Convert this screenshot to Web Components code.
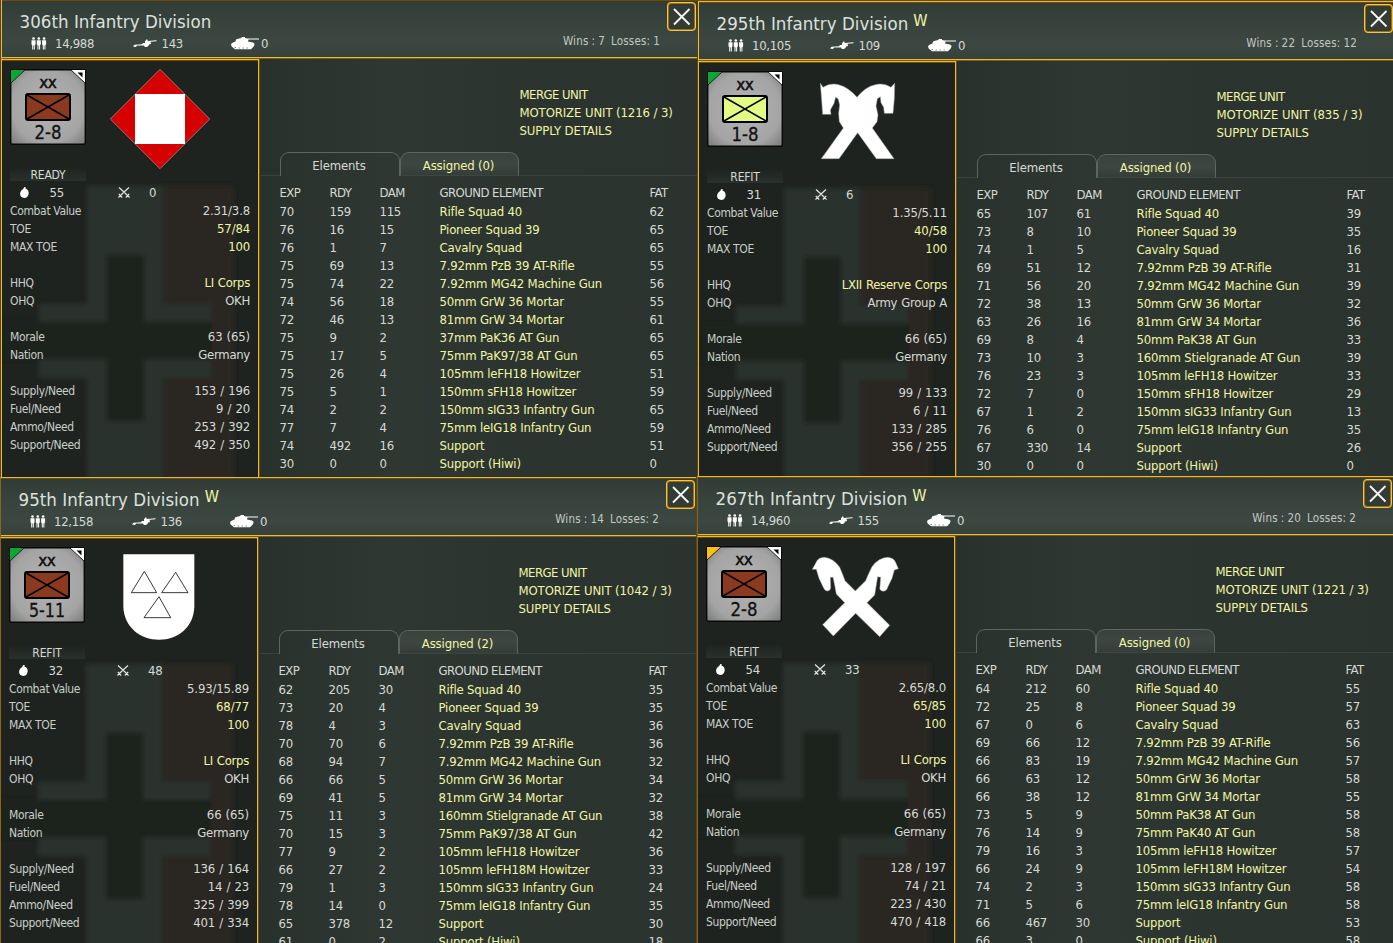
<!DOCTYPE html>
<html lang="en">
<head>
<meta charset="utf-8">
<title>Unit comparison</title>
<style>
html, body { margin: 0; height: 943px; overflow: hidden; background: #2c342f; }
body {
    font-family: "DejaVu Sans Condensed", "DejaVu Sans", sans-serif;
    font-stretch: condensed;
    font-size: 13px;
    color: #d6dad5;
    --gold: #e9b93c;
    --gold-dark: #6d4d08;
    --link: #f1f5a5;
}
</style>
</head>
<body>
<unit-board></unit-board>

<script>
const units = [
    {
        name: '306th Infantry Division', mark: '', men: '14,988', guns: '143', tanks: '0',
        wins: '7', losses: '1', edge: '#e9b93c', status: 'READY', flag: '#0aa832', box: '#8b3a20', power: '2-8', emblem: 'diamond',
        bombs: '55', swords: '0', motorize: '1216', assigned: '0',
        stats: ['2.31/3.8', '57/84', '100', 'LI Corps', 'OKH', '63 (65)', '153 / 196', '9 / 20', '253 / 392', '492 / 350'],
        rows: `70|159|115|Rifle Squad 40|62
76|16|15|Pioneer Squad 39|65
76|1|7|Cavalry Squad|65
75|69|13|7.92mm PzB 39 AT-Rifle|55
75|74|22|7.92mm MG42 Machine Gun|56
74|56|18|50mm GrW 36 Mortar|55
72|46|13|81mm GrW 34 Mortar|61
75|9|2|37mm PaK36 AT Gun|65
75|17|5|75mm PaK97/38 AT Gun|65
75|26|4|105mm leFH18 Howitzer|51
75|5|1|150mm sFH18 Howitzer|59
74|2|2|150mm sIG33 Infantry Gun|65
77|7|4|75mm leIG18 Infantry Gun|59
74|492|16|Support|51
30|0|0|Support (Hiwi)|0`
    },
    {
        name: '95th Infantry Division', mark: 'W', men: '12,158', guns: '136', tanks: '0',
        wins: '14', losses: '2', edge: '#8a6718', status: 'REFIT', flag: '#0aa832', box: '#8b3a20', power: '5-11', emblem: 'shield',
        bombs: '32', swords: '48', motorize: '1042', assigned: '2',
        stats: ['5.93/15.89', '68/77', '100', 'LI Corps', 'OKH', '66 (65)', '136 / 164', '14 / 23', '325 / 399', '401 / 334'],
        rows: `62|205|30|Rifle Squad 40|35
73|20|4|Pioneer Squad 39|35
78|4|3|Cavalry Squad|36
70|70|6|7.92mm PzB 39 AT-Rifle|36
68|94|7|7.92mm MG42 Machine Gun|32
66|66|5|50mm GrW 36 Mortar|34
69|41|5|81mm GrW 34 Mortar|32
75|11|3|160mm Stielgranade AT Gun|38
70|15|3|75mm PaK97/38 AT Gun|42
77|9|2|105mm leFH18 Howitzer|36
66|27|2|105mm leFH18M Howitzer|33
79|1|3|150mm sIG33 Infantry Gun|24
78|14|0|75mm leIG18 Infantry Gun|35
65|378|12|Support|30
61|0|2|Support (Hiwi)|18`
    },
    {
        name: '295th Infantry Division', mark: 'W', men: '10,105', guns: '109', tanks: '0',
        wins: '22', losses: '12', edge: '#e9b93c', status: 'REFIT', flag: '#0aa832', box: '#e4fb84', power: '1-8', emblem: 'horses',
        bombs: '31', swords: '6', motorize: '835', assigned: '0',
        stats: ['1.35/5.11', '40/58', '100', 'LXII Reserve Corps', 'Army Group A', '66 (65)', '99 / 133', '6 / 11', '133 / 285', '356 / 255'],
        rows: `65|107|61|Rifle Squad 40|39
73|8|10|Pioneer Squad 39|35
74|1|5|Cavalry Squad|16
69|51|12|7.92mm PzB 39 AT-Rifle|31
71|56|20|7.92mm MG42 Machine Gun|39
72|38|13|50mm GrW 36 Mortar|32
63|26|16|81mm GrW 34 Mortar|36
69|8|4|50mm PaK38 AT Gun|33
73|10|3|160mm Stielgranade AT Gun|39
76|23|3|105mm leFH18 Howitzer|33
72|7|0|150mm sFH18 Howitzer|29
67|1|2|150mm sIG33 Infantry Gun|13
76|6|0|75mm leIG18 Infantry Gun|35
67|330|14|Support|26
30|0|0|Support (Hiwi)|0`
    },
    {
        name: '267th Infantry Division', mark: 'W', men: '14,960', guns: '155', tanks: '0',
        wins: '20', losses: '2', edge: '#8a6718', status: 'REFIT', flag: '#fdc010', box: '#8b3a20', power: '2-8', emblem: 'heads',
        bombs: '54', swords: '33', motorize: '1221', assigned: '0',
        stats: ['2.65/8.0', '65/85', '100', 'LI Corps', 'OKH', '66 (65)', '128 / 197', '74 / 21', '223 / 430', '470 / 418'],
        rows: `64|212|60|Rifle Squad 40|55
72|25|8|Pioneer Squad 39|57
67|0|6|Cavalry Squad|63
69|66|12|7.92mm PzB 39 AT-Rifle|56
66|83|19|7.92mm MG42 Machine Gun|57
66|63|12|50mm GrW 36 Mortar|58
66|38|12|81mm GrW 34 Mortar|55
73|5|9|50mm PaK38 AT Gun|58
76|14|9|75mm PaK40 AT Gun|58
79|16|3|105mm leFH18 Howitzer|57
66|24|9|105mm leFH18M Howitzer|54
74|2|3|150mm sIG33 Infantry Gun|58
71|5|6|75mm leIG18 Infantry Gun|58
66|467|30|Support|53
66|3|0|Support (Hiwi)|58`
    }
];

const icons = {
    men: `<svg width="16" height="13" fill="#fff"><g id="m"><circle cx="2.5" cy="1.500" r="1.300"/><path d="M.5 3.200h4v4.500h-.7V12.500h-1V8.500h-.6v4h-1V7.700H.5z"/></g><use href="#m" x="5.300"/><use href="#m" x="10.600"/></svg>`,
    gun: `<svg width="24" height="11" fill="#fff"><path d="M0 8.500 1.500 6.800 9 6.200 10 5h2V3.200l2-2.200.8 2 8.700-.8v1l-6 .6.500 2.200-2 .6c-.3 3.200-4.500 3-5 .8L4 7.600 3 9z"/></svg>`,
    tank: `<svg width="28" height="13" fill="#fff"><path d="M8 1.500 10.500 1V0h3.500v1l2.500.6H28v1h-10.500L17 4.400l5 1 1.700 1.600-1 2.500-2.700 2.800H4L.6 9.500 0 7l2-1.600 2.500-.9L5 2.500z"/><path d="M3.500 10h1.500v1H3.500zM7.500 10.500H9v1H7.500zM11.500 10.500H13v1h-1.500zM15.500 10.500H17v1h-1.500z" fill="#8a938d"/></svg>`,
    bomb: `<svg width="9" height="11" fill="#fff"><path d="M3 2.300 4.300 0l1.500.3-.4 1.200L6.900 2.200C9.800 4 9.200 10.900 4.500 10.900-1.200 10.900-1 4.300 3 2.300z"/></svg>`,
    swords: `<svg width="12" height="11" fill="none" stroke="#e8e8e8" stroke-width="1.100"><path d="M1 .5l5 4.500 5.500 5.500M11 .5 6 5 .5 10.500M.8 7l3.400 3.500M11.200 7 7.800 10.500"/></svg>`
};

const emblems = {
    diamond: `<svg viewBox="330 207 300 300"><path d="M480 208 629 357 480 506 331 357z" fill="#d50000" stroke="#a9a9a9" stroke-width="2"/><path d="M405 282h150v150H405z" fill="#fff"/></svg>`,
    shield: `<svg viewBox="327 231 300 300"><path d="M370 253h213v157c-2 62-50 99-106 99s-105-38-107-99z" fill="#fff"/><path d="M433 304l37 64h-76zM527 307l37 61h-79zM477 380l35 63h-80z" fill="none" stroke="#111" stroke-width="2.500"/></svg>`,
    horses: `<svg viewBox="330 213 300 300"><path fill="#fff" stroke="#aaa" stroke-width="1.500" d="M370 250 378 262Q400 248 425 254 455 262 480 292 505 260 535 254 560 248 582 262L593 250 592 295 588 340 562 340 560 322 552 308 550 290 541 296 537 318 543 345 540 365 526 384 591 476 538 476 482 398 426 476 373 476 439 384 427 365 425 340 428 315 424 298 416 291 411 310 400 330 402 343 377 343 374 300Z"/></svg>`,
    heads: `<svg viewBox="327 228 300 300"><path fill="#fff" stroke="#aaa" stroke-width="1.500" d="M346 298 356 280Q362 262 382 262 410 265 428 292 438 315 444 332L475 363 506 332Q515 310 525 290 545 263 573 262 592 264 597 280L604 296 592 300 585 325 572 352Q568 366 556 363 546 360 549 350L551 322 542 320 537 350 533 375 510 398 578 466 548 500 476 430 409 498 377 464 443 398 418 372 413 345 408 322 400 322 401 350Q402 362 390 363 381 360 378 350L366 325 358 298Z"/></svg>`
};

// small helper: open shadow root filled from a string
const shadow = (host, html) => {
    const template = document.createElement('template');
    template.innerHTML = html;
    host.attachShadow({ mode: 'open' }).appendChild(template.content.cloneNode(true));
};


class StatIcon extends HTMLElement {
    connectedCallback() {
        shadow(this, `
<style>
:host { display: flex; align-items: center; }
svg { display: block; flex: none; }
</style>
${icons[this.getAttribute('name')]}<slot></slot>`);
    }
}
customElements.define('stat-icon', StatIcon);


class CloseButton extends HTMLElement {
    connectedCallback() {
        shadow(this, `
<style>
:host { display: block; width: 29px; height: 29px; }
svg { display: block; }
</style>
<svg width="29" height="29"><rect x="1" y="1" width="27" height="27" rx="3" fill="#333b35" stroke="#a06f08" stroke-width="2"/><rect x=".5" y=".5" width="28" height="28" rx="3.500" fill="none" stroke="#f0c650"/><path d="M7 7l15.500 15.500m0-15.500L7 22.500" stroke="#f5f5f5" stroke-width="1.900"/></svg>`);
    }
}
customElements.define('close-button', CloseButton);


class UnitCounter extends HTMLElement {
    connectedCallback() {
        shadow(this, `
<style>
:host { display: block; width: 76px; height: 76px; }
svg { display: block; }
text { font-family: "DejaVu Sans Condensed", "DejaVu Sans", sans-serif; font-stretch: condensed; text-anchor: middle; fill: #111; stroke: #111; stroke-width: .3px; }
.size { stroke-width: .7px; }
</style>
<svg width="76" height="76">
<defs><radialGradient id="g" r=".75"><stop offset="0" stop-color="#b4b4b4"/><stop offset=".65" stop-color="#a4a4a4"/><stop offset="1" stop-color="#707070"/></radialGradient></defs>
<rect x=".7" y=".7" width="74.600" height="74.600" rx="1.500" fill="url(#g)" stroke="#080808" stroke-width="1.400"/>
<path d="M1 1h14L1 14z" fill="${this.getAttribute('flag')}"/><path d="M15 1 1 14" stroke="#222"/>
<path d="M61 1h14v13z" fill="#fff"/><path d="M61 1l14 13" stroke="#222"/><path d="M67.500 3.500h5v5z" fill="#000"/>
<text class="size" x="38" y="19" font-size="13" textLength="17" lengthAdjust="spacingAndGlyphs">XX</text>
<rect x="16" y="25" width="44" height="26" rx="2" fill="${this.getAttribute('box')}" stroke="#000" stroke-width="2"/>
<path d="M17 26l42 24m0-24L17 50" stroke="#000" stroke-width="1.500"/>
<text x="38" y="70" font-size="19" textLength="${this.getAttribute('power').length * 9}" lengthAdjust="spacingAndGlyphs">${this.getAttribute('power')}</text>
</svg>`);
    }
}
customElements.define('unit-counter', UnitCounter);


class UnitEmblem extends HTMLElement {
    connectedCallback() {
        shadow(this, `
<style>
:host { display: block; width: 100px; height: 100px; }
svg { display: block; width: 100px; height: 100px; }
</style>
${emblems[this.getAttribute('name')]}`);
    }
}
customElements.define('unit-emblem', UnitEmblem);


class UnitHeader extends HTMLElement {
    // the panel that owns this header holds the data
    get unit() {
        return this.getRootNode().host.unit;
    }

    connectedCallback() {
        const u = this.unit;
        shadow(this, `
<style>
:host {
    display: flex;
    justify-content: space-between;
    box-sizing: border-box;
    height: 60px;
    border-top: 1px solid var(--gold);
    border-bottom: 1px solid #7d5a0c;
    background: linear-gradient(var(--gold-dark) 0 1px, #323c37 1px, #39443f 45%, #3c4742 75%, #36413c 57px, var(--gold) 57px);
}
.main { padding: 9px 0 0 17.5px; }
h1 { margin: 0; font-size: 18.5px; line-height: 25px; height: 26px; font-weight: normal; letter-spacing: .05px; color: #dde1dc; white-space: nowrap; }
sup { font-size: 16px; line-height: 10px; vertical-align: 4px; color: var(--link); margin-left: 5px; }
.strength { display: grid; grid-template-columns: 102px 98px 60px; padding-left: 11.5px; line-height: 17px; letter-spacing: -.3px; }
.strength stat-icon:nth-child(1) { gap: 8px; }
.strength stat-icon:nth-child(2) { gap: 4.5px; }
.strength stat-icon:nth-child(3) { gap: 2px; }
.side { display: flex; align-items: flex-start; padding-right: 1px; }
.record { padding: 33px 7px 0 0; font-size: 11.5px; line-height: 16px; white-space: pre; letter-spacing: .2px; word-spacing: -.5px; color: #c3c8c3; }
close-button { margin-top: 2px; }
</style>
<div class="main">
<h1>${u.name}${u.mark ? `<sup>${u.mark}</sup>` : ''}</h1>
<div class="strength"><stat-icon name="men">${u.men}</stat-icon><stat-icon name="gun">${u.guns}</stat-icon><stat-icon name="tank">${u.tanks}</stat-icon></div>
</div>
<div class="side"><span class="record">Wins : ${u.wins}  Losses: ${u.losses}</span><close-button></close-button></div>`);
    }
}
customElements.define('unit-header', UnitHeader);


class UnitSummary extends HTMLElement {
    get unit() {
        return this.getRootNode().host.unit;
    }

    connectedCallback() {
        const u = this.unit;
        const labels = ['Combat Value', 'TOE', 'MAX TOE', '', 'HHQ', 'OHQ', '', 'Morale', 'Nation', '', 'Supply/Need', 'Fuel/Need', 'Ammo/Need', 'Support/Need'];
        const values = [...u.stats];
        values.splice(6, 0, 'Germany');
        const rows = labels.map((label) => {
            const link = ['TOE', 'MAX TOE', 'HHQ'].includes(label) ? 'link' : '';
            const name = ['HHQ', 'OHQ', 'Nation'].includes(label) ? 'name' : '';
            return label ? `<dt>${label}</dt><dd class="${link} ${name}">${values.shift()}</dd>` : '<dt></dt><dd></dd>';
        }).join('');
        shadow(this, `
<style>
:host { display: grid; box-sizing: border-box; height: 100%; border: 1px solid var(--gold); border-bottom: 0; border-left-color: var(--edge); border-right: 0; overflow: hidden; background: #1e231f; }
:host > * { grid-area: 1 / 1; min-width: 0; }
.flag { display: block; }
.body { box-sizing: border-box; border-right: 1px solid var(--gold); box-shadow: inset 0 1px #6d4d08; padding: 9px 0 0 8px; }
.top { display: flex; gap: 24px; height: 99px; }
.status { width: 76px; height: 13px; line-height: 14px; text-align: center; font-size: 12px; letter-spacing: -.2px; background: linear-gradient(#1f2420, #2a302c); }
.supply { display: grid; grid-template-columns: 98.5px 60px; height: 21px; line-height: 23px; padding-left: 9.5px; letter-spacing: -.3px; }
.supply stat-icon { height: 23px; }
.supply stat-icon:first-child { gap: 21px; }
.supply stat-icon:last-child { gap: 19px; }
dl { display: grid; grid-template-columns: 90px 1fr; grid-auto-rows: 18px; margin: 0; padding-right: 8px; line-height: 18px; white-space: nowrap; }
dt { font-size: 12px; letter-spacing: -.35px; color: #c9cec9; }
dd { margin: 0; text-align: right; letter-spacing: -.15px; word-spacing: .6px; }
.link { color: var(--link); }
.name { letter-spacing: -.3px; }
</style>
<svg class="flag" width="257" height="420">
<defs><filter id="b" x="-10%" y="-10%" width="120%" height="120%"><feGaussianBlur stdDeviation="2.500"/></filter></defs>
<g filter="url(#b)"><path d="M162 126h70v310h-70z" fill="#2b2623"/><path d="M85 126h76v310H85zM37 244h172v74H37z" fill="#2a302d"/><path d="M105 195h37v166h-37zM-9 262h219v37H-9z" fill="#1d221e"/></g>
</svg>
<div class="body">
<div class="top"><unit-counter flag="${u.flag}" box="${u.box}" power="${u.power}"></unit-counter><unit-emblem name="${u.emblem}"></unit-emblem></div>
<div class="status">${u.status}</div>
<div class="supply"><stat-icon name="bomb">${u.bombs}</stat-icon><stat-icon name="swords">${u.swords}</stat-icon></div>
<dl>${rows}</dl>
</div>`);
    }
}
customElements.define('unit-summary', UnitSummary);


class ElementTabs extends HTMLElement {
    connectedCallback() {
        shadow(this, `
<style>
:host { display: grid; grid-template: 24px / 21px 120px 119px 1fr; height: 24px; line-height: 26px; text-align: center; letter-spacing: -.15px; }
i { border-bottom: 1px solid #39423d; }
.tab { box-sizing: border-box; border: 1px solid #5c6661; border-bottom: 0; border-radius: 9px 9px 0 0; padding-right: 2px; }
.rest { background: linear-gradient(#39423d, #3d4641 50%, #343d38); border-bottom: 1px solid #3c4641; color: var(--link); }
</style>
<i></i><div class="tab"><slot name="open"></slot></div><div class="tab rest"><slot name="rest"></slot></div><i></i>`);
    }
}
customElements.define('element-tabs', ElementTabs);


class ElementTable extends HTMLElement {
    get rows() {
        return this.getRootNode().host.unit.rows;
    }

    connectedCallback() {
        const rows = this.rows.split('\n').map((line) => line.split('|').map((cell, i) => `<span${i == 3 ? ' class="link"' : ''}>${cell}</span>`).join('')).join('');
        shadow(this, `
<style>
:host { display: grid; grid-template-columns: 50px 50px 60px 210px 46px; grid-template-rows: 19px; grid-auto-rows: 18px; line-height: 18px; white-space: nowrap; letter-spacing: -.3px; }
b { font-weight: normal; letter-spacing: -.55px; }
.link { color: var(--link); letter-spacing: -.19px; }
</style>
<b>EXP</b><b>RDY</b><b>DAM</b><b>GROUND ELEMENT</b><b>FAT</b>${rows}`);
    }
}
customElements.define('element-table', ElementTable);


class UnitPanel extends HTMLElement {
    connectedCallback() {
        const u = this.unit;
        shadow(this, `
<style>
:host { display: flex; flex-direction: column; box-sizing: border-box; width: 697px; overflow: hidden; border-left: 1px solid #5a4410; --edge: ${u.edge}; background: #2c342f; }
unit-header { flex: none; border-left: 1px solid var(--edge); }
.body { display: flex; flex: 1; min-height: 0; }
unit-summary { flex: none; width: 258px; }
.right { flex: 1; min-width: 0; border-left: 1px solid #6d4d08; background: linear-gradient(90deg, #29312c, #2e3732 30%, #2c342f 60%, #2b332e); }
.actions { padding: 27px 0 0 259.5px; line-height: 18px; height: 66px; color: var(--link); letter-spacing: -.1px; }
.actions :first-child { letter-spacing: -.55px; }
element-table { padding: 8px 0 0 19.5px; }
element-tabs { margin-left: -1px; }
</style>
<unit-header></unit-header>
<div class="body">
<unit-summary></unit-summary>
<div class="right">
<div class="actions"><div>MERGE UNIT</div><div>MOTORIZE UNIT (${u.motorize} / 3)</div><div>SUPPLY DETAILS</div></div>
<element-tabs><span slot="open">Elements</span><span slot="rest">Assigned (${u.assigned})</span></element-tabs>
<element-table></element-table>
</div>
</div>`);
    }
}
customElements.define('unit-panel', UnitPanel);


class UnitBoard extends HTMLElement {
    connectedCallback() {
        shadow(this, `
<style>
:host { display: grid; grid-template-columns: 697px 696px; width: 1393px; height: 943px; overflow: hidden; }
.col { display: flex; flex-direction: column; height: 944px; margin-top: -1px; }
.col + .col { margin-top: 0; padding-top: 1px; height: 943px; box-sizing: border-box; background: #6d4d08; }
unit-panel { flex: none; }
.col unit-panel:first-child { height: 478px; }
.col unit-panel:last-child { height: 466px; margin-left: -1px; }
.col + .col unit-panel:first-child { height: 475px; }
.col + .col unit-panel:last-child { height: 467px; }
</style>
<div class="col"></div><div class="col"></div>`);
        const cols = this.shadowRoot.querySelectorAll('.col');
        units.forEach((unit, i) => {
            const panel = document.createElement('unit-panel');
            panel.unit = unit;
            cols[i < 2 ? 0 : 1].appendChild(panel);
        });
    }
}
customElements.define('unit-board', UnitBoard);
</script>
</body>
</html>
